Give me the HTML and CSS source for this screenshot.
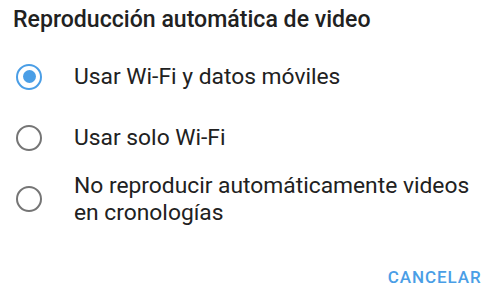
FILE: index.html
```html
<!DOCTYPE html>
<html lang="es">
<head>
<meta charset="utf-8">
<link rel="stylesheet" href="styles.css">
</head>
<body>
<div class="dialog">
  <h1 class="title">Reproducción automática de video</h1>
  <ul class="options">
    <li class="option">
      <span class="radio checked"><span class="dot"></span></span>
      <span class="label">Usar Wi-Fi y datos móviles</span>
    </li>
    <li class="option">
      <span class="radio"></span>
      <span class="label">Usar solo Wi-Fi</span>
    </li>
    <li class="option">
      <span class="radio"></span>
      <span class="label">No reproducir automáticamente videos en cronologías</span>
    </li>
  </ul>
  <div class="actions">
    <button class="btn">CANCELAR</button>
  </div>
</div>
</body>
</html>
```
FILE: styles.css
```css
html, body {
  margin: 0;
  padding: 0;
  background: #ffffff;
}
body {
  font-family: Roboto, "Noto Sans", sans-serif;
  color: #212121;
}
.dialog {
  width: 500px;
  height: 303px;
  box-sizing: border-box;
  padding: 6px 0 0 0;
  display: flex;
  flex-direction: column;
}
.title {
  margin: 0 0 0 13px;
  font-size: 23.1px;
  font-weight: 500;
  line-height: 28px;
  color: #212121;
}
.options {
  list-style: none;
  margin: 12px 0 0 0;
  padding: 0;
  display: flex;
  flex-direction: column;
}
.option {
  display: flex;
  align-items: center;
  padding-left: 16px;
  min-height: 61px;
}
.radio {
  flex: none;
  box-sizing: border-box;
  width: 26px;
  height: 26px;
  border: 2.7px solid #757575;
  border-radius: 50%;
  display: flex;
  align-items: center;
  justify-content: center;
  margin-right: 32px;
}
.radio.checked {
  border-color: #4a9ee6;
}
.dot {
  width: 13px;
  height: 13px;
  border-radius: 50%;
  background: #4a9ee6;
}
.label {
  font-size: 22.8px;
  line-height: 27px;
  color: #212121;
  padding-right: 16px;
}
.actions {
  margin-top: auto;
  display: flex;
  justify-content: flex-end;
  padding: 0 18.5px 16px 0;
}
.btn {
  border: none;
  background: none;
  padding: 0;
  font-family: Roboto, "Noto Sans", sans-serif;
  font-size: 17px;
  font-weight: 500;
  color: #4a9ee6;
  letter-spacing: 0.9px;
  line-height: 20px;
}
```
